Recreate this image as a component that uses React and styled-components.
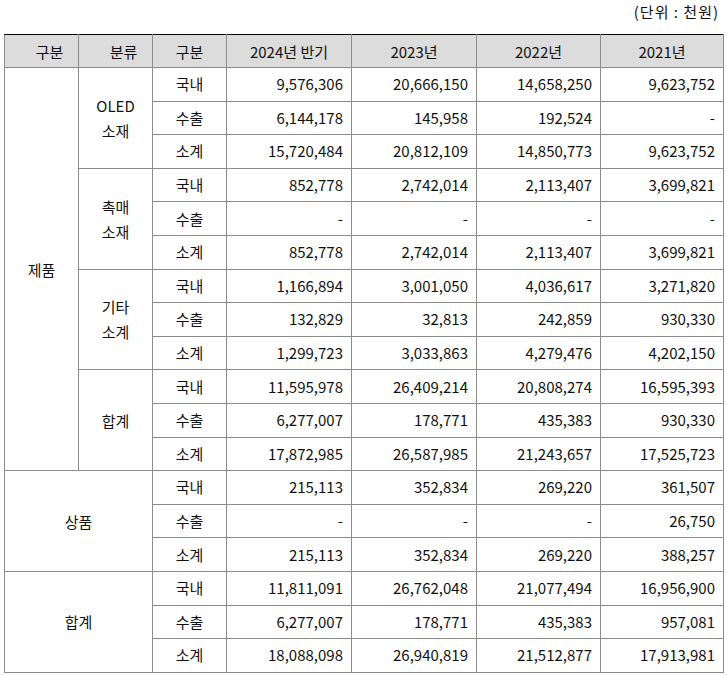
import React from 'react'
import styled, { createGlobalStyle } from 'styled-components'

const GlobalStyle = createGlobalStyle`
  body {
    margin: 0;
    background: #fff;
    font-family: "Noto Sans CJK KR", "Noto Sans", sans-serif;
    color: #111;
  }
`

const Page = styled.div`
  width: 727px;
  padding: 0 4px;
  box-sizing: border-box;
`

const Unit = styled.div`
  height: 34px;
  line-height: 24px;
  text-align: right;
  padding-right: 4px;
  font-size: 15px;
  letter-spacing: 1px;
`

const Table = styled.table`
  width: 719px;
  border-collapse: collapse;
  table-layout: fixed;
  border: 1px solid #000;
  font-size: 15px;
`

const Col = styled.col`
  width: ${p => p.$w}px;
`

const Th = styled.th`
  height: 32px;
  padding: 0;
  padding-left: ${p => (p.$shift ? '16px' : '0')};
  background: #dcdcdc;
  border: 1px solid #8c8c8c;
  border-top-color: #000;
  font-weight: normal;
  text-align: center;
`

const Group = styled.td`
  padding: 0;
  border: 1px solid #8c8c8c;
  text-align: center;
  line-height: 25px;
`

const Kind = styled.td`
  height: 32.6px;
  padding: 0;
  border: 1px solid #8c8c8c;
  text-align: center;
  line-height: 20px;
`

const Num = styled.td`
  padding: 0 8px 0 0;
  border: 1px solid #8c8c8c;
  text-align: right;
  line-height: 20px;
`

const widths = [74, 74, 74, 125, 125, 124, 123]
const years = ['2024년 반기', '2023년', '2022년', '2021년']

const rows3 = (vals) => [
  ['국내', vals[0]],
  ['수출', vals[1]],
  ['소계', vals[2]],
]

const product = [
  {
    name: ['OLED', '소재'],
    rows: rows3([
      ['9,576,306', '20,666,150', '14,658,250', '9,623,752'],
      ['6,144,178', '145,958', '192,524', '-'],
      ['15,720,484', '20,812,109', '14,850,773', '9,623,752'],
    ]),
  },
  {
    name: ['촉매', '소재'],
    rows: rows3([
      ['852,778', '2,742,014', '2,113,407', '3,699,821'],
      ['-', '-', '-', '-'],
      ['852,778', '2,742,014', '2,113,407', '3,699,821'],
    ]),
  },
  {
    name: ['기타', '소계'],
    rows: rows3([
      ['1,166,894', '3,001,050', '4,036,617', '3,271,820'],
      ['132,829', '32,813', '242,859', '930,330'],
      ['1,299,723', '3,033,863', '4,279,476', '4,202,150'],
    ]),
  },
  {
    name: ['합계'],
    rows: rows3([
      ['11,595,978', '26,409,214', '20,808,274', '16,595,393'],
      ['6,277,007', '178,771', '435,383', '930,330'],
      ['17,872,985', '26,587,985', '21,243,657', '17,525,723'],
    ]),
  },
]

const totals = [
  {
    name: '상품',
    rows: rows3([
      ['215,113', '352,834', '269,220', '361,507'],
      ['-', '-', '-', '26,750'],
      ['215,113', '352,834', '269,220', '388,257'],
    ]),
  },
  {
    name: '합계',
    rows: rows3([
      ['11,811,091', '26,762,048', '21,077,494', '16,956,900'],
      ['6,277,007', '178,771', '435,383', '957,081'],
      ['18,088,098', '26,940,819', '21,512,877', '17,913,981'],
    ]),
  },
]

const Cells = ({ kind, values }) => (
  <>
    <Kind>{kind}</Kind>
    {values.map((v, i) => <Num key={i}>{v}</Num>)}
  </>
)

export default function App() {
  return (
    <Page>
      <GlobalStyle />
      <Unit>(단위 : 천원)</Unit>
      <Table>
        <colgroup>
          {widths.map((w, i) => <Col key={i} $w={w} />)}
        </colgroup>
        <thead>
          <tr>
            <Th $shift>구분</Th>
            <Th $shift>분류</Th>
            <Th>구분</Th>
            {years.map(y => <Th key={y}>{y}</Th>)}
          </tr>
        </thead>
        <tbody>
          {product.map((g, gi) =>
            g.rows.map(([kind, values], ri) => (
              <tr key={`p${gi}${ri}`}>
                {gi === 0 && ri === 0 && <Group rowSpan={12}>제품</Group>}
                {ri === 0 && (
                  <Group rowSpan={3}>
                    {g.name.map((n, i) => <div key={i}>{n}</div>)}
                  </Group>
                )}
                <Cells kind={kind} values={values} />
              </tr>
            ))
          )}
          {totals.map((g, gi) =>
            g.rows.map(([kind, values], ri) => (
              <tr key={`t${gi}${ri}`}>
                {ri === 0 && <Group rowSpan={3} colSpan={2}>{g.name}</Group>}
                <Cells kind={kind} values={values} />
              </tr>
            ))
          )}
        </tbody>
      </Table>
    </Page>
  )
}
